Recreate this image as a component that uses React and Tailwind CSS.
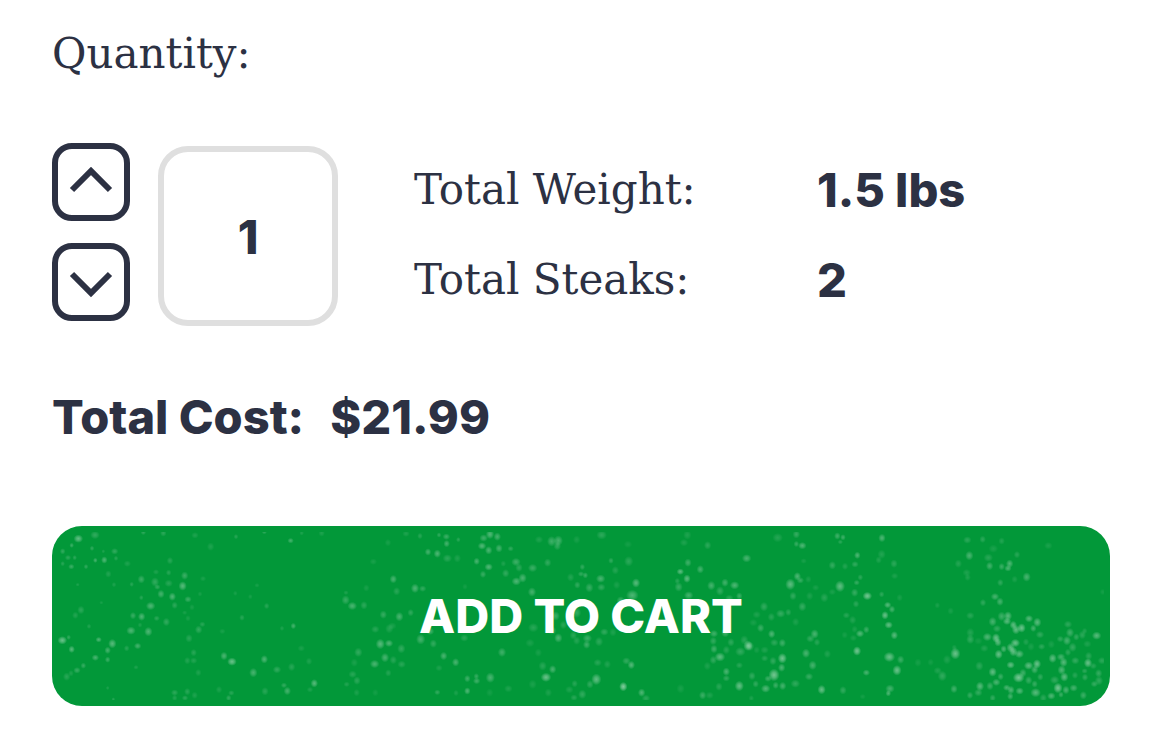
import { useState } from "react";

// Speckles of the worn-paint texture: [x, y, radius, opacity], in thirds of a pixel.
const LEFT = [
  [115,68,9,.5],[95,88,5,.3],[68,106,6,.25],[84,125,6,.22],[104,125,5,.22],[68,143,5,.2],[94,152,6,.3],[138,152,5,.25],[156,97,5,.25],[165,57,9,.25],[166,133,5,.35],[193,132,7,.4],[224,106,7,.25],[228,127,5,.2],[190,106,4,.15],
  [262,143,7,.15],[205,174,7,.17],[222,206,5,.15],[113,206,4,.15],[310,48,6,.25],[370,51,7,.22],[465,58,7,.15],[512,92,8,.15],[588,62,5,.2],[752,74,6,.35],[785,51,5,.15],[845,51,7,.15],[673,48,5,.25],[1044,80,7,.12],
  [390,134,7,.2],[348,168,6,.15],[386,170,6,.2],[434,179,8,.3],[489,188,6,.13],[304,190,8,.3],[345,198,9,.25],[386,202,8,.2],[428,210,9,.45],[275,205,5,.2],[352,213,6,.25],[363,234,8,.35],[397,242,8,.4],[444,250,7,.3],[304,245,5,.2],[480,234,5,.12],[332,270,9,.4],[404,268,7,.22],[456,274,6,.12],[434,290,5,.12],
  [123,282,8,.22],[106,298,7,.17],[184,260,4,.12],[279,299,7,.28],[305,302,8,.4],[350,307,6,.22],[379,318,8,.25],[444,307,6,.12],[273,344,9,.4],[325,347,9,.4],[300,327,5,.15],[487,325,6,.2],[476,341,8,.25],[447,367,8,.2],[547,346,6,.12],[606,305,6,.2],[680,270,6,.2],[651,208,5,.12],[586,232,5,.12],[631,242,5,.12],
  [67,373,9,.55],[86,364,5,.25],[95,400,7,.45],[176,371,6,.4],[217,383,9,.45],[203,403,7,.35],[166,425,7,.38],[203,431,6,.3],[260,397,6,.2],[293,390,7,.35],[147,331,5,.17],[130,449,6,.27],[111,463,7,.28],[80,482,8,.2],[93,472,6,.15],
  [288,454,5,.15],[461,410,7,.2],[442,434,7,.17],[461,434,7,.17],[475,470,7,.15],[552,420,8,.38],[576,437,9,.55],[673,430,8,.4],[640,470,9,.37],[711,461,8,.25],[755,453,8,.2],[807,436,7,.15],[784,397,7,.13],[760,330,6,.35],[726,337,5,.15],
  [404,530,7,.22],[442,527,7,.2],[464,538,7,.15],[435,546,6,.22],[404,546,6,.17],[537,521,7,.14],[574,531,6,.2],[566,546,6,.25],[675,526,8,.2],[732,508,6,.25],[742,525,8,.35],[823,502,8,.45],[810,521,6,.15],[220,550,4,.2],[203,516,4,.15],
  [937,270,9,.38],[917,252,9,.28],[972,268,8,.22],[918,230,5,.15],[979,216,7,.12],[1060,190,8,.28],[1000,137,7,.12],[1030,296,8,.27],[1070,226,8,.2],[1006,340,8,.2],[1048,338,9,.17],[1021,384,10,.45],[1047,382,8,.4],[955,409,9,.25],[1035,425,9,.37],[1004,444,9,.38],[1060,432,8,.2],[943,440,8,.13],[938,475,8,.2],[951,494,8,.22],[1045,471,7,.18],[920,505,6,.17],[950,530,7,.14],[1006,530,7,.1],
];
const MIDDLE = [
  [48,53,7,.15],[90,60,6,.2],[147,57,5,.25],[169,62,7,.3],[170,83,7,.35],[205,71,5,.22],[281,66,8,.32],[300,55,9,.42],[322,62,8,.35],[276,90,8,.42],[296,103,8,.38],[327,97,8,.35],[362,98,6,.25],[114,108,7,.35],[142,113,8,.4],[172,127,9,.22],[202,127,8,.15],[260,136,7,.37],[296,153,8,.42],[279,175,7,.28],[340,143,6,.15],[378,138,9,.32],[387,155,8,.22],[347,172,8,.25],[428,156,9,.3],[473,140,8,.25],[398,186,9,.38],[379,196,9,.4],
  [485,76,10,.32],[505,74,10,.35],[447,71,8,.15],[502,90,8,.25],[560,71,8,.12],[635,57,10,.23],[663,134,6,.25],[716,136,10,.22],[714,85,8,.1],[676,163,8,.18],[577,153,6,.25],[573,174,6,.25],[586,178,6,.3],[542,184,8,.17],[632,188,9,.38],[562,207,7,.25],[598,215,9,.28],[634,214,8,.25],[680,207,8,.13],[738,201,9,.45],[727,238,12,.4],[692,255,9,.35],
  [892,57,9,.15],[882,80,8,.15],[953,88,8,.22],[894,140,8,.32],[871,167,7,.48],[891,188,8,.47],[931,160,8,.35],[1070,127,9,.37],[866,213,9,.28],[862,195,6,.2],[896,238,9,.35],[964,209,9,.35],[1005,200,8,.33],[1034,208,9,.4],[990,225,9,.25],[1048,240,7,.3],[1018,247,8,.22],
  [10,188,8,.12],[75,217,9,.4],[98,218,7,.25],[28,302,9,.37],[62,290,7,.24],[7,330,8,.13],[225,212,6,.1],[92,370,10,.35],[120,346,8,.35],[130,383,8,.25],[34,398,9,.25],[35,445,8,.2],[161,420,8,.37],[197,439,8,.37],[223,366,8,.2],[336,409,9,.32],[426,228,9,.35],[430,335,10,.2],
  [497,300,9,.3],[520,327,8,.2],[486,344,9,.28],[505,366,9,.38],[550,358,8,.2],[592,367,9,.3],[590,386,8,.32],[560,374,8,.18],[643,348,8,.25],[627,377,9,.22],[669,349,8,.15],[420,381,9,.13],[445,410,8,.12],[560,290,10,.25],
  [147,456,7,.14],[232,488,7,.32],[259,481,6,.27],[260,495,7,.32],[301,485,10,.38],[232,525,7,.4],[142,529,6,.25],[198,531,6,.14],[299,530,8,.1],[355,518,8,.15],[458,450,9,.2],[488,460,8,.37],[468,484,10,.55],[428,505,9,.13],[475,530,8,.14],[538,521,8,.15],[554,503,7,.2],[577,535,9,.25],[552,545,7,.2],[619,490,11,.5],[600,505,8,.25],[623,440,8,.2],[652,445,8,.16],[700,512,9,.68],[709,435,8,.25],[724,447,8,.43],[755,530,8,.4],[768,547,8,.22],
  [872,518,9,.12],[938,538,8,.3],[959,538,8,.15],[987,512,8,.2],[1009,467,8,.38],[1009,487,7,.25],[1048,510,10,.52],[1074,389,10,.55],[1051,407,10,.25],[1063,372,9,.2],[1023,379,8,.23],[972,353,8,.32],[970,375,8,.25],[972,399,8,.33],[990,423,10,.48],[970,432,8,.25],[1009,402,8,.2],[1048,448,7,.2],[952,450,8,.14],[1006,350,9,.35],
];
const RIGHT = [
  [83,65,10,.18],[139,55,8,.27],[139,84,6,.28],[157,89,8,.4],[262,60,7,.32],[279,64,6,.32],[271,78,5,.22],[396,66,8,.4],[322,118,7,.4],[315,145,7,.25],[247,148,8,.26],[285,151,7,.17],[161,135,6,.12],[395,115,9,.17],[432,143,8,.22],[434,180,7,.14],[386,132,7,.16],[331,184,6,.22],[320,200,6,.27],[142,181,8,.4],[121,205,11,.48],[151,193,7,.28],[175,190,7,.13],[270,211,11,.5],[352,240,9,.6],[314,230,8,.27],[223,245,9,.2],[247,228,7,.13],[129,240,8,.25],[157,272,9,.27],[197,215,7,.12],[179,240,8,.14],
  [42,272,9,.25],[92,293,9,.27],[115,289,7,.22],[64,303,8,.2],[20,296,8,.15],[32,336,8,.3],[65,354,8,.4],[10,320,8,.12],[137,318,8,.14],[318,264,7,.22],[289,298,7,.2],[308,312,8,.17],[395,235,6,.23],[413,267,7,.44],[426,280,7,.35],[405,298,8,.53],[416,327,8,.5],[433,358,8,.45],[449,245,7,.12],[330,353,8,.42],[349,341,7,.3],[314,340,7,.13],[310,366,7,.13],[284,357,7,.11],[194,354,9,.37],[181,368,8,.25],[201,379,7,.2],
  [0,391,9,.3],[73,380,8,.23],[97,381,8,.32],[20,402,7,.12],[44,402,8,.16],[97,427,10,.58],[69,435,8,.25],[44,427,7,.2],[95,455,8,.38],[72,477,12,.6],[54,488,7,.3],[168,412,9,.37],[188,448,9,.35],[177,482,8,.28],[232,414,8,.16],[321,405,9,.59],[418,423,11,.54],[452,431,8,.3],[441,463,10,.55],[349,470,7,.37],[215,521,9,.52],[279,523,8,.25],[136,503,9,.24],[98,510,8,.35],[77,508,7,.3],[47,518,9,.42],[17,504,7,.25],[6,480,8,.25],[420,518,9,.35],[415,532,6,.4],[4,547,6,.15],[338,542,6,.1],[504,440,8,.11],[542,439,7,.1],
  [652,72,8,.22],[698,70,7,.22],[755,75,7,.17],[730,98,9,.13],[658,119,9,.38],[625,143,8,.18],[650,170,8,.15],[653,184,7,.15],[719,150,8,.34],[715,125,9,.2],[755,152,7,.3],[779,143,8,.4],[774,157,7,.38],[801,116,7,.2],[830,183,9,.37],[895,89,8,.13],[751,200,7,.24],[794,190,7,.14],[735,242,8,.36],[750,257,8,.35],[699,260,7,.24],[661,299,8,.2],[602,285,7,.12],[562,268,6,.13],[685,375,8,.1],
  [755,301,9,.32],[774,300,9,.45],[771,316,8,.45],[728,317,9,.36],[790,327,8,.48],[741,338,8,.25],[798,341,9,.5],[815,336,9,.56],[837,308,8,.43],[862,319,9,.46],[850,337,7,.35],[870,356,8,.25],[661,350,9,.18],[661,370,9,.25],[712,363,9,.4],[738,366,9,.53],[744,379,8,.45],[796,381,9,.54],[782,395,9,.48],[790,407,9,.5],[808,414,9,.45],[761,399,7,.4],[746,415,9,.53],[703,397,8,.17],[828,378,7,.17],[843,392,8,.13],[875,392,7,.23],
  [616,413,11,.55],[613,395,6,.15],[782,447,8,.5],[728,468,9,.5],[688,450,9,.22],[836,449,9,.48],[861,444,9,.55],[854,461,8,.36],[806,485,11,.62],[819,471,8,.32],[752,482,7,.3],[739,499,8,.38],[690,511,9,.45],[720,510,8,.3],[685,530,8,.26],[660,538,7,.27],[728,546,7,.26],[770,515,7,.37],[783,522,8,.4],[781,541,7,.35],[809,525,8,.42],[836,493,8,.28],[854,504,7,.28],[857,530,10,.45],[871,483,7,.25],[577,480,10,.25],[563,464,8,.16],[591,431,9,.15],[612,519,8,.34],
  [954,325,8,.23],[960,350,9,.32],[951,374,9,.36],[931,369,7,.24],[997,357,8,.22],[1004,345,6,.17],[1040,359,9,.45],[979,363,7,.25],[968,394,9,.26],[1012,384,8,.15],[904,385,8,.13],[908,427,9,.48],[933,423,8,.35],[941,439,9,.44],[954,409,7,.23],[976,434,8,.26],[1014,441,9,.54],[1016,420,8,.22],[1056,434,8,.22],[935,462,9,.4],[943,483,9,.48],[914,492,9,.25],[924,516,10,.6],[948,522,8,.38],[971,516,8,.36],[975,478,7,.2],[1005,484,7,.25],[1004,465,6,.23],[1046,472,8,.27],[1047,494,9,.24],[1033,504,7,.27],[1000,538,8,.3],[1047,541,8,.27],[904,540,8,.4],[880,546,8,.22],[933,536,6,.3],[1030,450,7,.2],[1058,228,6,.1],
];

const PATCHES = [
  { dots: LEFT, shift: "translate(-12 -10) scale(0.3333)" },
  { dots: MIDDLE, shift: "translate(338 -10) scale(0.3333)" },
  { dots: RIGHT, shift: "translate(698 -10) scale(0.3333)" },
];

// Each speckle fades out from its centre.
function Texture() {
  return (
    <svg
      className="pointer-events-none absolute inset-0 size-full"
      viewBox="0 0 1058 180"
      preserveAspectRatio="none"
      aria-hidden="true"
    >
      <defs>
        <radialGradient id="speck">
          <stop offset="0" stopColor="#fff" stopOpacity="0.75" />
          <stop offset="0.45" stopColor="#fff" stopOpacity="0.5" />
          <stop offset="1" stopColor="#fff" stopOpacity="0" />
        </radialGradient>
        <clipPath id="inner">
          <rect x="6" y="6" width="1046" height="168" rx="24" />
        </clipPath>
      </defs>
      <g clipPath="url(#inner)" fill="url(#speck)">
        {PATCHES.map(({ dots, shift }) => (
          <g key={shift} transform={shift}>
            {dots.map(([x, y, r, o], i) => (
              <ellipse key={i} cx={x} cy={y} rx={i % 3 ? r * 1.4 : r * 1.6} ry={i % 3 ? r * 1.6 : r * 1.4} opacity={o} />
            ))}
          </g>
        ))}
      </g>
    </svg>
  );
}

function StepButton({ label, points, onClick }) {
  return (
    <button
      type="button"
      aria-label={label}
      onClick={onClick}
      className="flex size-[78px] items-center justify-center rounded-[20px] border-6 border-[#2c3143]"
    >
      <svg className="size-[66px]" viewBox="0 0 66 66" fill="none" stroke="currentColor" strokeWidth="6" aria-hidden="true">
        <polyline points={points} />
      </svg>
    </button>
  );
}

export default function App() {
  const [quantity, setQuantity] = useState(1);
  const serif = "font-['DejaVu_Serif',serif] text-[42px] leading-[60px]";
  const bold = "font-['Inter',sans-serif] text-[47px] font-extrabold leading-[60px]";

  return (
    <form
      className="bg-white pt-6 pr-12 pb-9 pl-[52px] text-[#2c3143]"
      onSubmit={(e) => e.preventDefault()}
    >
      <label htmlFor="quantity" className={`block ${serif}`}>
        Quantity:
      </label>

      <div className="mt-[59px] flex items-start">
        <div className="flex flex-col gap-[22px]">
          <StepButton label="Increase quantity" points="14,41 33,22 52,41" onClick={() => setQuantity(quantity + 1)} />
          <StepButton label="Decrease quantity" points="14,25 33,44 52,25" onClick={() => setQuantity(Math.max(1, quantity - 1))} />
        </div>
        <input
          id="quantity"
          type="text"
          inputMode="numeric"
          value={quantity}
          onChange={(e) => setQuantity(Number(e.target.value) || 1)}
          className={`mt-[3px] ml-7 size-[180px] shrink-0 rounded-[30px] border-6 border-[#dfdfdf] text-center ${bold}`}
        />
        <dl className="mt-[17px] ml-[76px] grid grid-cols-[403px_auto] gap-y-[30px] whitespace-nowrap">
          <dt className={serif}>Total Weight:</dt>
          <dd className={bold}>{quantity * 1.5} lbs</dd>
          <dt className={serif}>Total Steaks:</dt>
          <dd className={bold}>{quantity * 2}</dd>
        </dl>
      </div>

      <p className={`mt-[61px] flex gap-[26px] ${bold}`}>
        <span>Total Cost:</span>
        <span>${(quantity * 21.99).toFixed(2)}</span>
      </p>

      <button
        type="submit"
        className={`relative mt-[79px] block h-[180px] w-full rounded-[30px] bg-[#029839] text-white ${bold}`}
      >
        <Texture />
        <span className="relative">ADD TO CART</span>
      </button>
    </form>
  );
}
